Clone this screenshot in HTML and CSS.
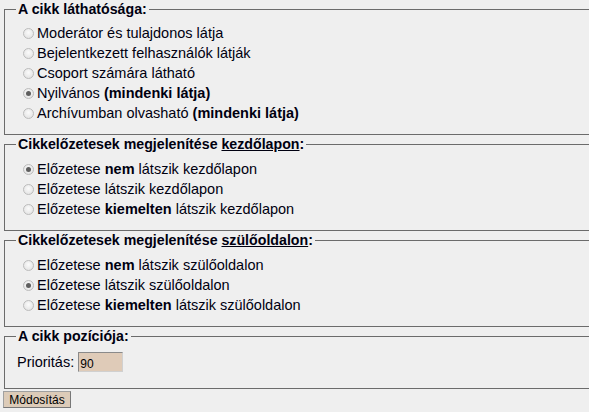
FILE: index.html
```html
<!DOCTYPE html>
<html lang="hu">
<head>
<meta charset="utf-8">
<title>Cikk beállításai</title>
<link rel="stylesheet" href="styles.css">
</head>
<body>
<form class="form">
  <fieldset class="box">
    <legend class="legend">A cikk láthatósága:</legend>
    <div class="rows rows-first">
      <label class="row"><input type="radio" name="vis" class="radio"><span>Moderátor és tulajdonos látja</span></label>
      <label class="row"><input type="radio" name="vis" class="radio"><span>Bejelentkezett felhasználók látják</span></label>
      <label class="row"><input type="radio" name="vis" class="radio"><span>Csoport számára látható</span></label>
      <label class="row"><input type="radio" name="vis" class="radio" checked><span>Nyilvános <b>(mindenki látja)</b></span></label>
      <label class="row"><input type="radio" name="vis" class="radio"><span>Archívumban olvasható <b>(mindenki látja)</b></span></label>
    </div>
  </fieldset>
  <fieldset class="box">
    <legend class="legend">Cikkelőzetesek megjelenítése <u>kezdőlapon</u>:</legend>
    <div class="rows">
      <label class="row"><input type="radio" name="home" class="radio" checked><span>Előzetese <b>nem</b> látszik kezdőlapon</span></label>
      <label class="row"><input type="radio" name="home" class="radio"><span>Előzetese látszik kezdőlapon</span></label>
      <label class="row"><input type="radio" name="home" class="radio"><span>Előzetese <b>kiemelten</b> látszik kezdőlapon</span></label>
    </div>
  </fieldset>
  <fieldset class="box">
    <legend class="legend">Cikkelőzetesek megjelenítése <u>szülőoldalon</u>:</legend>
    <div class="rows">
      <label class="row"><input type="radio" name="parent" class="radio"><span>Előzetese <b>nem</b> látszik szülőoldalon</span></label>
      <label class="row"><input type="radio" name="parent" class="radio" checked><span>Előzetese látszik szülőoldalon</span></label>
      <label class="row"><input type="radio" name="parent" class="radio"><span>Előzetese <b>kiemelten</b> látszik szülőoldalon</span></label>
    </div>
  </fieldset>
  <fieldset class="box">
    <legend class="legend">A cikk pozíciója:</legend>
    <div class="prio">
      <label class="prio-label" for="prio">Prioritás:</label>
      <input id="prio" class="field" type="text" value="90">
    </div>
  </fieldset>
  <button type="button" class="btn">Módosítás</button>
</form>
</body>
</html>
```
FILE: styles.css
```css
html, body {
  margin: 0;
  padding: 0;
  background: #efefef;
  overflow: hidden;
}
body {
  font-family: "Liberation Sans", Arial, sans-serif;
  font-size: 14.5px;
  color: #000010;
  padding: 0 0 0 4px;
}
.form {
  display: flex;
  flex-direction: column;
  align-items: flex-start;
}
.box {
  margin: 0;
  width: 620px;
  border: 1px solid #6b6b6b;
  padding: 0 0 11px 11px;
  box-sizing: border-box;
}
.legend {
  font-weight: bold;
  font-size: 14.2px;
  padding: 0 2px;
  line-height: 19px;
}
.rows {
  display: flex;
  flex-direction: column;
  padding-top: 5px;
}
.rows-first {
  padding-top: 4px;
}
.row {
  display: flex;
  align-items: center;
  height: 20px;
  white-space: nowrap;
}
.row b { font-weight: bold; }
.radio {
  appearance: none;
  -webkit-appearance: none;
  flex: none;
  width: 11px;
  height: 11px;
  margin: 0 3px 0 7px;
  border-radius: 50%;
  border: 1px solid #bcbcbc;
  background: radial-gradient(circle at 50% 40%, #fbfbfb, #dedede);
  box-sizing: border-box;
  position: relative;
}
.radio:checked::after {
  content: "";
  position: absolute;
  left: 2px;
  top: 2px;
  width: 5px;
  height: 5px;
  border-radius: 50%;
  background: #5e5e5e;
}
.prio {
  display: flex;
  align-items: center;
  padding: 6px 0 5px 1px;
  gap: 4px;
}
.field {
  width: 45px;
  height: 20px;
  box-sizing: border-box;
  background: #dfcbb8;
  border: 1px solid #d0d0d0;
  border-top-color: #8a8a8a;
  border-left-color: #8a8a8a;
  font-family: "Liberation Sans", Arial, sans-serif;
  font-size: 12px;
  padding: 3px 1px 0;
  color: #000;
}
.btn {
  margin: 2px 0 0 -1px;
  width: 68px;
  height: 17px;
  padding: 0;
  font-family: "Liberation Sans", Arial, sans-serif;
  font-size: 12px;
  color: #000;
  background: #dccbb8;
  border: 1px solid #a0a0a0;
  border-right-color: #777;
  border-bottom-color: #777;
}
```
